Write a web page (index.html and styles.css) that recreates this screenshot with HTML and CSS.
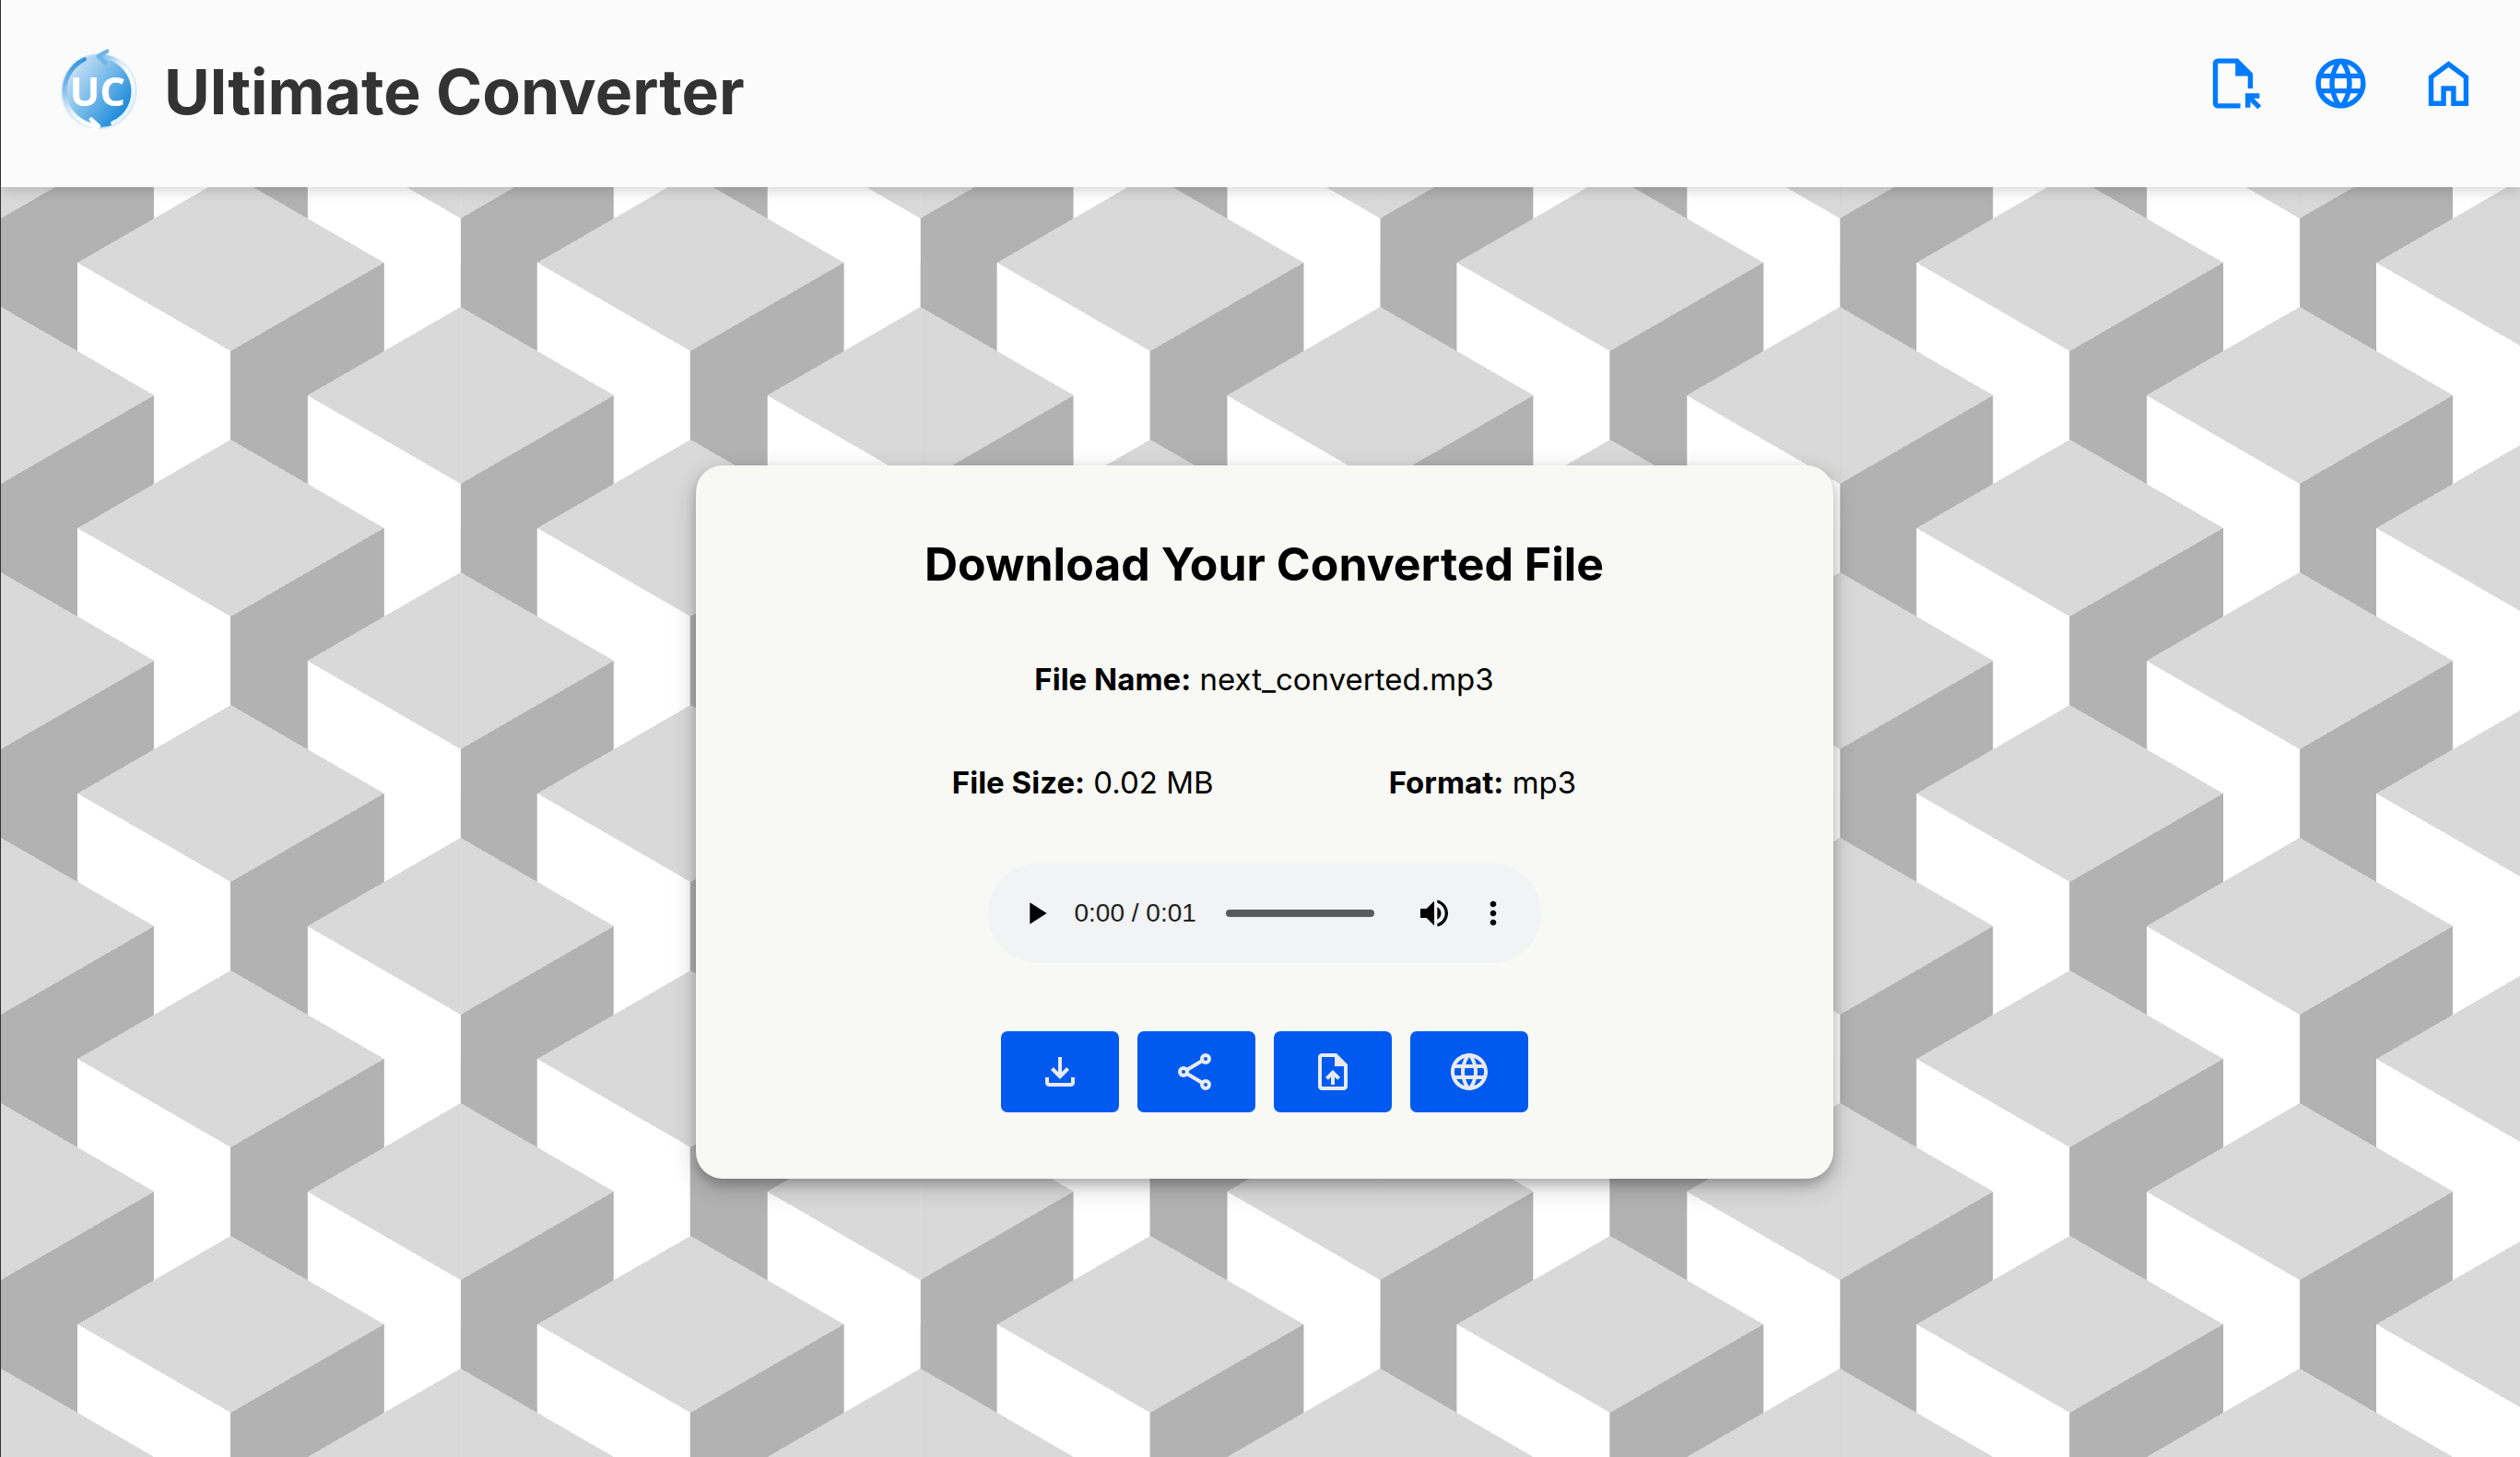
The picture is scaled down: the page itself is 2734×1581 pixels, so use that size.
FILE: index.html
```html
<!DOCTYPE html>
<html lang="en">
<head>
  <meta charset="utf-8">
  <meta name="viewport" content="width=device-width, initial-scale=1">
  <title>Ultimate Converter</title>
  <link rel="stylesheet" href="styles.css">
</head>
<body>
  <svg class="sprite" aria-hidden="true">
    <symbol id="icon-globe" viewBox="0 0 24 24">
      <path d="M11.99 2C6.47 2 2 6.48 2 12s4.47 10 9.99 10C17.52 22 22 17.52 22 12S17.52 2 11.99 2zm6.93 6h-2.95c-.32-1.25-.78-2.45-1.38-3.56 1.84.63 3.37 1.91 4.33 3.56zM12 4.04c.83 1.2 1.48 2.53 1.91 3.96h-3.82c.43-1.43 1.08-2.76 1.91-3.96zM4.26 14C4.1 13.36 4 12.69 4 12s.1-1.36.26-2h3.38c-.08.66-.14 1.32-.14 2s.06 1.34.14 2H4.26zm.82 2h2.95c.32 1.25.78 2.45 1.38 3.56-1.84-.63-3.37-1.9-4.33-3.56zm2.95-8H5.08c.96-1.66 2.49-2.93 4.33-3.56C8.81 5.55 8.35 6.75 8.03 8zM12 19.96c-.83-1.2-1.48-2.53-1.91-3.96h3.82c-.43 1.43-1.08 2.76-1.91 3.96zM14.34 14H9.66c-.09-.66-.16-1.32-.16-2s.07-1.35.16-2h4.68c.09.65.16 1.32.16 2s-.07 1.34-.16 2zm.25 5.56c.6-1.11 1.06-2.31 1.38-3.56h2.95c-.96 1.65-2.49 2.93-4.33 3.56zM16.36 14c.08-.66.14-1.32.14-2s-.06-1.34-.14-2h3.38c.16.64.26 1.31.26 2s-.1 1.36-.26 2h-3.38z"/>
    </symbol>
  </svg>

  <header class="header">
    <div class="brand">
      <svg class="logo" viewBox="60 40 270 279" role="img" aria-label="UC">
        <defs>
          <linearGradient id="disc" x1="0.1" y1="0.2" x2="0.9" y2="0.8">
            <stop offset="0" stop-color="#c9e2f5"/>
            <stop offset="0.5" stop-color="#71b6e8"/>
            <stop offset="1" stop-color="#1286d8"/>
          </linearGradient>
          <linearGradient id="arc-left" x1="0" y1="0" x2="0" y2="1">
            <stop offset="0" stop-color="#3596de"/>
            <stop offset="0.5" stop-color="#8cc3ec"/>
            <stop offset="0.8" stop-color="#e4f1fb"/>
            <stop offset="1" stop-color="#ffffff"/>
          </linearGradient>
          <linearGradient id="arc-right" x1="0" y1="0" x2="0.6" y2="1">
            <stop offset="0" stop-color="#72b6e7"/>
            <stop offset="0.3" stop-color="#d3e8f7"/>
            <stop offset="0.55" stop-color="#ffffff"/>
            <stop offset="1" stop-color="#e3f1fb"/>
          </linearGradient>
          <filter id="soft"><feGaussianBlur stdDeviation="3"/></filter>
        </defs>
        <circle cx="202" cy="181" r="121" fill="#a9d3f2" filter="url(#soft)"/>
        <circle cx="202" cy="181" r="118" fill="url(#disc)"/>
        <g fill="none" stroke-width="14" stroke-linecap="round" stroke-linejoin="round">
          <path d="M155 77A114 114 0 0 0 190 293" stroke="url(#arc-left)"/>
          <path d="M247 285A114 114 0 0 0 204 67" stroke="url(#arc-right)"/>
          <path d="M177 273L200 294L173 311" stroke="#ffffff"/>
          <path d="M228 51L200 67L223 88" stroke="#72b6e7"/>
        </g>
        <text class="logo-text" x="197" y="230" text-anchor="middle">UC</text>
      </svg>
      <h1 class="brand-name">Ultimate Converter</h1>
    </div>
    <nav class="nav" aria-label="Main">
      <a class="nav-link" href="#open" aria-label="Open file">
        <svg viewBox="0 0 24 24"><path d="M6 22q-.825 0-1.412-.587T4 20V4q0-.825.588-1.412T6 2h8l6 6v6h-2V9h-5V4H6v16h9v2H6Zm15.95.375L19 19.4v2.25h-2V16h5.65v2H20.4l2.95 2.95-1.4 1.425Z"/></svg>
      </a>
      <a class="nav-link" href="#web" aria-label="Website">
        <svg><use href="#icon-globe"/></svg>
      </a>
      <a class="nav-link" href="#home" aria-label="Home">
        <svg viewBox="0 0 24 24"><path d="M4 21V9l8-6 8 6v12h-7v-6h-2v6H4Zm2-2h3v-6h6v6h3v-9l-6-4.5L6 10v9Z"/></svg>
      </a>
    </nav>
  </header>

  <main class="main">
    <section class="card">
      <h2 class="card-title">Download Your Converted File</h2>
      <p class="detail"><strong>File Name:</strong> next_converted.mp3</p>
      <div class="detail-row">
        <p class="detail"><strong>File Size:</strong> 0.02 MB</p>
        <p class="detail"><strong>Format:</strong> mp3</p>
      </div>

      <div class="player">
        <button class="player-button" type="button" aria-label="Play">
          <svg viewBox="0 0 24 24"><path d="M8 5v14l11-7z"/></svg>
        </button>
        <span class="player-time">0:00 / 0:01</span>
        <input class="player-seek" type="range" min="0" max="1" value="0" aria-label="Seek">
        <button class="player-button" type="button" aria-label="Mute">
          <svg viewBox="0 0 24 24"><path d="M3 9v6h4l5 5V4L7 9H3zm13.5 3c0-1.77-1.02-3.29-2.5-4.03v8.05c1.48-.73 2.5-2.25 2.5-4.02zM14 3.23v2.06c2.89.86 5 3.54 5 6.71s-2.11 5.85-5 6.71v2.06c4.01-.91 7-4.49 7-8.77s-2.99-7.86-7-8.77z"/></svg>
        </button>
        <button class="player-button player-menu" type="button" aria-label="More options">
          <svg viewBox="0 0 24 24"><path d="M12 8c1.1 0 2-.9 2-2s-.9-2-2-2-2 .9-2 2 .9 2 2 2zm0 2c-1.1 0-2 .9-2 2s.9 2 2 2 2-.9 2-2-.9-2-2-2zm0 6c-1.1 0-2 .9-2 2s.9 2 2 2 2-.9 2-2-.9-2-2-2z"/></svg>
        </button>
      </div>

      <div class="actions">
        <button class="action" type="button" aria-label="Download">
          <svg viewBox="0 0 24 24"><path d="M12 16l-5-5 1.4-1.45 2.6 2.6V4h2v8.15l2.6-2.6L17 11l-5 5Zm-6 4q-.825 0-1.412-.587T4 18v-3h2v3h12v-3h2v3q0 .825-.587 1.413T18 20H6Z"/></svg>
        </button>
        <button class="action" type="button" aria-label="Share">
          <svg class="icon-outline" viewBox="0 0 24 24"><circle cx="5" cy="12" r="2"/><circle cx="17" cy="5" r="2"/><circle cx="17" cy="19" r="2"/><path d="M6.8 11L15.2 6M6.8 13L15.2 18"/></svg>
        </button>
        <button class="action" type="button" aria-label="Convert another file">
          <svg viewBox="0 0 24 24"><path d="M11 19h2v-4.175l1.6 1.6L16 15l-4-4-4 4 1.425 1.4L11 14.825V19Zm-5 3q-.825 0-1.412-.587T4 20V4q0-.825.588-1.412T6 2h8l6 6v12q0 .825-.587 1.413T18 22H6Zm7-13V4H6v16h12V9h-5Z"/></svg>
        </button>
        <button class="action" type="button" aria-label="Convert from the web">
          <svg><use href="#icon-globe"/></svg>
        </button>
      </div>
    </section>
  </main>
</body>
</html>
```

FILE: styles.css
```css
:root {
  --cube: 288px;
  --dark: #b2b2b2;
  --light: #ffffff;
  --top: #d9d9d9;
  --face: var(--top) 0 120deg, #0000 0;
}

* {
  box-sizing: border-box;
}

body {
  margin: 0;
  min-height: 100vh;
  display: flex;
  flex-direction: column;
  border-left: 1px solid #333333;
  font-family: Inter, "Open Sans", sans-serif;
  color: #000000;
}

.sprite {
  display: none;
}

/* Header */
.header {
  z-index: 1;
  display: flex;
  align-items: center;
  justify-content: space-between;
  min-height: 203px;
  padding: 0 45px 0 59px;
  background: #fbfbfb;
  box-shadow: 0 6px 12px rgba(0, 0, 0, 0.13);
}

.brand {
  display: flex;
  align-items: center;
  gap: 28px;
  padding-bottom: 6px;
}

.logo {
  width: 90px;
  height: 93px;
}

.logo-text {
  font: 700 130px "Open Sans", sans-serif;
  fill: #ffffff;
}

.brand-name {
  margin: 0;
  font-size: 68px;
  line-height: 96px;
  font-weight: 700;
  color: #333333;
}

.nav {
  display: flex;
  gap: 52px;
  padding-bottom: 23px;
}

.nav-link {
  display: block;
  color: #007bff;
}

.nav-link svg {
  display: block;
  width: 65px;
  height: 65px;
  fill: currentColor;
}

/* Isometric cube backdrop */
.main {
  flex: 1;
  display: flex;
  align-items: center;
  justify-content: center;
  padding: 48px 0 48px 8px;
  background:
    conic-gradient(from -60deg at 50% calc(100% / 3), var(--face)),
    conic-gradient(from 120deg at 50% calc(200% / 3), var(--face)),
    conic-gradient(from 60deg at calc(200% / 3), var(--top) 60deg, var(--light) 0 120deg, #0000 0),
    conic-gradient(from 180deg at calc(100% / 3), var(--dark) 60deg, var(--face)),
    linear-gradient(90deg, var(--dark) calc(100% / 6), var(--light) 0 50%, var(--dark) 0 calc(500% / 6), var(--light) 0);
  background-size: calc(1.732 * var(--cube)) var(--cube);
  background-position: 0 82px;
}

/* Card */
.card {
  display: flex;
  flex-direction: column;
  align-items: center;
  width: 1234px;
  max-width: 92%;
  padding: 72px;
  border-radius: 29px;
  background: #f8f9f4;
  box-shadow: 0 6px 12px rgba(0, 0, 0, 0.2), 0 9px 29px rgba(0, 0, 0, 0.19);
}

.card-title {
  margin: 0 0 66px;
  font-size: 50px;
  line-height: 70px;
  font-weight: 700;
  text-align: center;
}

.detail {
  margin: 0;
  font-size: 33px;
  line-height: 48px;
}

.detail-row {
  display: flex;
  justify-content: center;
  gap: 190px;
  margin: 64px 0;
}

.player {
  display: flex;
  align-items: center;
  width: 600px;
  max-width: 100%;
  height: 108px;
  padding: 0 32px;
  border-radius: 54px;
  background: #f1f3f4;
}

.player-button {
  padding: 0;
  border: 0;
  background: none;
}

.player-button svg {
  display: block;
  width: 40px;
  height: 40px;
}

.player-time {
  margin: 0 32px 0 22px;
  font: 28px "Liberation Sans", sans-serif;
  color: #222222;
  white-space: nowrap;
}

.player-seek {
  flex: 1;
  min-width: 0;
  height: 8px;
  margin: 0 45px 0 0;
  appearance: none;
  border-radius: 4px;
  background: #5a5a5a;
}

.player-seek::-webkit-slider-thumb {
  appearance: none;
  width: 0;
  height: 0;
}

.player-menu {
  margin-left: 24px;
}

.actions {
  display: flex;
  gap: 20px;
  margin-top: 74px;
}

.action {
  display: flex;
  align-items: center;
  justify-content: center;
  width: 128px;
  height: 88px;
  padding: 0;
  border: 0;
  border-radius: 7px;
  background: #005af0;
  color: #e8eaed;
}

.action svg {
  width: 48px;
  height: 48px;
  fill: currentColor;
}

.action .icon-outline {
  fill: none;
  stroke: currentColor;
  stroke-width: 2;
}
```
